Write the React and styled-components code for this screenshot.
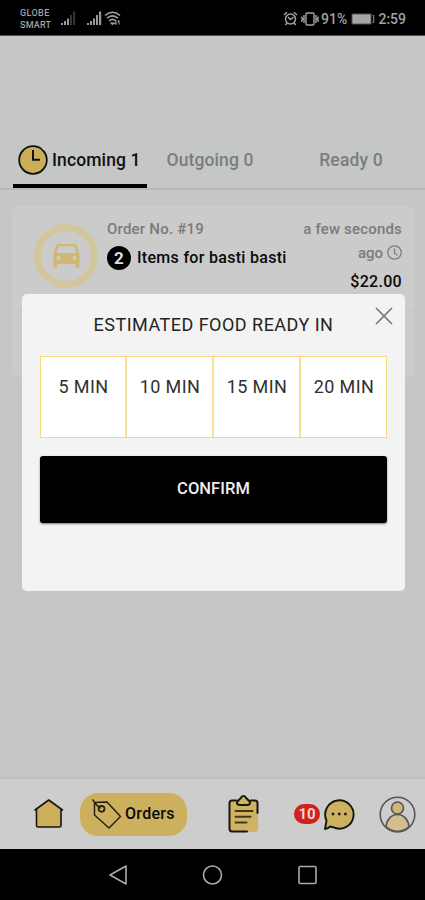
import React from 'react';
import styled, { createGlobalStyle } from 'styled-components';

const Global = createGlobalStyle`
  * { box-sizing: border-box; }
  body { margin: 0; background: #c5c7c6; font-family: Roboto, "Liberation Sans", sans-serif; }
  svg { display: block; flex: none; }
  button { font: inherit; border: 0; padding: 0; background: none; color: inherit; }
`;

const Phone = styled.div`
  position: relative;
  width: 425px;
  height: 900px;
  display: flex;
  flex-direction: column;
  overflow: hidden;
  background: #c5c7c6;
  color: #0a0a0a;
`;

const Label = styled.span`
  white-space: nowrap;
  font-size: ${(p) => p.$size || 16}px;
  font-weight: ${(p) => p.$weight || 500};
  line-height: ${(p) => p.$line || 20}px;
  letter-spacing: ${(p) => p.$track || 0}px;
  color: ${(p) => p.$color || 'inherit'};
`;

const StatusBar = styled.header`
  height: 36px;
  flex: none;
  padding: 2px 19px 0 20px;
  display: flex;
  align-items: center;
  background: #000;
  color: #a2a2a2;
  border-bottom: 1px solid #4b4c4c;
`;

const Carriers = styled.div`
  display: flex;
  flex-direction: column;
  width: 40px;
`;

const StatusRight = styled.div`
  display: flex;
  align-items: center;
  margin-left: auto;
`;

const Tabs = styled.nav`
  height: 60px;
  margin-top: 94px;
  flex: none;
  padding-left: 13px;
  display: grid;
  grid-template-columns: 134px 126px 156px;
  border-bottom: 2px solid #b7b9b8;
`;

const Tab = styled.button`
  display: flex;
  align-items: center;
  justify-content: ${(p) => (p.$active ? 'flex-start' : 'center')};
  gap: 4px;
  height: 58px;
  padding-left: ${(p) => (p.$active ? 5 : 0)}px;
  padding-top: ${(p) => (p.$active ? 5 : 1)}px;
  border-bottom: ${(p) => (p.$active ? '4px solid #000' : '0')};
  color: ${(p) => (p.$active ? '#111' : '#7c7d7d')};
`;

const OrderCard = styled.section`
  margin: 16px 11px 0 12px;
  height: 171px;
  flex: none;
  border-radius: 6px;
  background: #cbcbcb;
`;

const OrderMain = styled.div`
  height: 100px;
  display: flex;
  padding: 13px 12px 0 22px;
  border-bottom: 1px solid #d3d4d3;
`;

const Ring = styled.div`
  width: 64px;
  height: 64px;
  margin-top: 5px;
  border-radius: 50%;
  border: 7px solid #d2c69e;
  display: grid;
  place-items: center;
`;

const OrderInfo = styled.div`
  margin-left: 9px;
  display: flex;
  flex-direction: column;
`;

const ItemsLine = styled.div`
  display: flex;
  align-items: center;
  gap: 6px;
  margin-top: 7px;
`;

const Count = styled.span`
  width: 24px;
  height: 24px;
  border-radius: 50%;
  background: #000;
  color: #dedede;
  font-size: 17px;
  font-weight: 700;
  line-height: 24px;
  text-align: center;
`;

const OrderMeta = styled.div`
  margin-left: auto;
  display: flex;
  flex-direction: column;
  align-items: flex-end;
`;

const Ago = styled.div`
  display: flex;
  align-items: center;
  gap: 4px;
  margin: 4px 0 9px;
`;

const BottomNav = styled.nav`
  height: 72px;
  margin-top: auto;
  flex: none;
  display: flex;
  align-items: center;
  padding: 0 9px 0 33px;
  background: #cdcdcd;
  border-top: 2px solid #bfc1c0;
`;

const OrdersPill = styled.button`
  width: 107px;
  height: 43px;
  margin-left: 15px;
  padding-left: 12px;
  border-radius: 18px;
  background: #ccb05d;
  display: flex;
  align-items: center;
  gap: 3px;
`;

const NavSlot = styled.div`
  display: flex;
  align-items: center;
  gap: 3px;
  margin-left: ${(p) => p.$gap}px;
`;

const Badge = styled.span`
  width: 26px;
  height: 20px;
  border-radius: 10px;
  background: #d4201c;
  color: #eadada;
  font-size: 15px;
  font-weight: 700;
  line-height: 20px;
  text-align: center;
`;

const SystemNav = styled.footer`
  height: 51px;
  flex: none;
  display: flex;
  align-items: center;
  justify-content: center;
  gap: 73.500px;
  background: #000;
`;

const Modal = styled.section`
  position: absolute;
  top: 294px;
  left: 22px;
  width: 383px;
  height: 297px;
  padding: 0 18px;
  border-radius: 5px;
  background: #f3f3f3;
`;

const ModalTitle = styled.h1`
  margin: 0;
  height: 61px;
  padding-top: 21px;
  display: flex;
  justify-content: center;
`;

const Close = styled.button`
  position: absolute;
  top: 13px;
  right: 12px;
`;

const Times = styled.div`
  height: 82px;
  margin-top: 1px;
  display: grid;
  grid-template-columns: 86px 87px 87px 1fr;
  border: 1px solid #f9da7f;
`;

const Time = styled.button`
  background: #fff;
  padding-top: 20px;
  padding-left: 1px;
  display: flex;
  justify-content: center;
  align-items: flex-start;
  border-right: 2px solid #fae092;
  &:last-child { border-right: 0; }
`;

const Confirm = styled.button`
  width: 347px;
  height: 67px;
  margin-top: 18px;
  padding-bottom: 1px;
  display: flex;
  align-items: center;
  justify-content: center;
  border-radius: 3px;
  background: #000;
  box-shadow: 0 1px 2px rgba(0, 0, 0, 0.5);
`;

const Signal = ({ weak }) => (
  <svg width="17" height="17" viewBox="0 0 17 17" fill="#999">
    <path d="M1 13h2v2H1zM4 11h2v4H4zM7 8.500h2V15H7z" />
    <path d="M10 5h2v10h-2zM13 1.500h2.200V15H13z" fill={weak ? '#333' : '#999'} />
  </svg>
);

const Wifi = () => (
  <svg width="17" height="17" viewBox="0 0 17 17" fill="none" stroke="#a2a2a2" strokeWidth="1.600">
    <path d="M1 5.500q7.500-6.500 15 0M3 8.200q5.500-4.800 11 0M5.200 10.800q3.300-2.800 6.600 0" />
    <path d="M7 13l1.500 1.500L10 13zM12 10.500v4m-1.300-1.300L12 14.500M15 14.500v-4m-1.200 1.200L15 10.500" strokeWidth="1.100" />
  </svg>
);

const Alarm = () => (
  <svg width="15" height="15" viewBox="0 0 15 15" fill="none" stroke="#a2a2a2" strokeWidth="1.500">
    <circle cx="7.500" cy="8" r="5" />
    <path d="M1 4l3-2.800M14 4l-3-2.800M5 6l2.500 2.500L10.500 6M3.800 12L2.500 14M11.200 12l1.300 2" />
  </svg>
);

const Vibrate = () => (
  <svg width="18" height="16" viewBox="0 0 18 16" fill="none" stroke="#a2a2a2" strokeWidth="1.400">
    <rect x="5" y="2" width="8" height="12" rx="1" />
    <path d="M3 4v8M.8 5.500v1.500l1 1-1 1V11M15 4v8M17.200 5.500V7l-1 1 1 1v2" />
  </svg>
);

const Battery = () => (
  <svg width="24" height="12" viewBox="0 0 24 12">
    <rect x=".5" y=".5" width="20" height="11" rx="1" fill="#555" />
    <rect x="1.500" y="1.500" width="18" height="9" fill="#a6a6a6" />
    <path d="M21.500 2.500h1.200v7h-1.200" fill="none" stroke="#999" />
  </svg>
);

const TabClock = () => (
  <svg width="30" height="30" viewBox="0 0 30 30" fill="none" stroke="#111" strokeWidth="1.800">
    <circle cx="15" cy="15" r="13.800" fill="#ccad58" />
    <path d="M15 5v9.800h7" strokeWidth="2" />
    <path d="M24.800 3.200l1.300 1.300" stroke="#c5c7c6" strokeWidth="1.800" />
  </svg>
);

const Car = () => (
  <svg width="27" height="24" viewBox="0 0 28 24" preserveAspectRatio="none" fill="#cfb871">
    <path fillRule="evenodd" d="M5.500 0h17c1.400 0 2 .7 2.500 2l2.500 8v12.500c0 .8-.5 1.200-1.300 1.200h-1.500c-.8 0-1.300-.5-1.300-1.300V20H4.600v2.400c0 .8-.5 1.300-1.300 1.300H1.800c-.8 0-1.300-.4-1.300-1.200V10L3 2C3.400.7 4.200 0 5.500 0zM5.700 2.300L3.600 9h20.800l-2.100-6.700zM5.700 11.700a2 2 0 100 4.100 2 2 0 000-4.100zM22.300 11.700a2 2 0 100 4.100 2 2 0 000-4.100z" />
  </svg>
);

const AgoClock = () => (
  <svg width="15" height="16" viewBox="0 0 15 16" fill="none" stroke="#7b7b7b" strokeWidth="1.200">
    <circle cx="7.500" cy="7.500" r="6.700" />
    <path d="M7.500 3.500V8l3 2.300" />
  </svg>
);

const CloseIcon = () => (
  <svg width="18" height="18" viewBox="0 0 18 18" fill="none" stroke="#777" strokeWidth="1.700">
    <path d="M1 1l16 16M17 1L1 17" />
  </svg>
);

const Home = () => (
  <svg width="32" height="32" viewBox="0 0 32 32" fill="none" stroke="#17150d" strokeWidth="1.600" strokeLinejoin="round" strokeLinecap="round">
    <path d="M3.500 11.500L15.500 3l12.500 8.500v16q0 1.500-1.500 1.500H5q-1.500 0-1.500-1.500z" fill="#ccaf5c" stroke="none" />
    <path d="M2 12l13.700-10L29.500 12M3.500 11.500v16Q3.500 29 5 29h21.500q1.500 0 1.500-1.500v-16" />
  </svg>
);

const Tag = () => (
  <svg width="30" height="32" viewBox="0 0 30 32" fill="none" stroke="#211d10" strokeWidth="1.400" strokeLinecap="round" strokeLinejoin="round">
    <path d="M2.500 4.500L15 4l13.500 14.500L17 30 2.500 17zM.8 1.800C3 5.500 5 8 8.500 10" />
    <circle cx="9.500" cy="10.800" r="3" strokeWidth="1.700" />
  </svg>
);

const Clipboard = () => (
  <svg width="34" height="40" viewBox="0 0 34 40" fill="none" stroke="#19160d" strokeWidth="2" strokeLinejoin="round" strokeLinecap="round">
    <rect x="3" y="7" width="28" height="31" rx="3" fill="#d0b263" stroke="none" />
    <path d="M9.500 6.500H5Q2.500 6.500 2.500 9v25.500Q2.500 37.500 5 37.500h15M23.500 6.500H28q2.500 0 2.500 2.500v10" />
    <path d="M10 8l3-3.200q1 0 1-1Q14.500 2 16.500 2t2.500 1.800q0 1 1 1L23 8q.5 3-3 3h-7q-3.500 0-3-3z" fill="#d0b263" />
    <path d="M8.500 17h17M8.500 22.700h15M8.500 28.500h11" stroke="#40381f" strokeWidth="2" />
  </svg>
);

const Chat = () => (
  <svg width="32" height="33" viewBox="0 0 32 33" fill="#ccb160" stroke="#17150d" strokeWidth="1.900" strokeLinejoin="round">
    <path d="M2 31l1.500-8.500A14.200 14.200 0 1110 29.200L7 28.500q-1.500 2-5 2.500z" />
    <path d="M8.800 16h2.400M15 16h2.400M21.200 16h2.400" strokeWidth="2.400" />
  </svg>
);

const Profile = () => (
  <svg width="37" height="37" viewBox="0 0 37 37" fill="none" stroke="#555" strokeWidth="1.600">
    <path d="M7 31c.5-7 5-12.500 11.500-12.500S29.500 24 30 31q-11.500 9-23 0z" fill="#d6bd8c" />
    <circle cx="18.500" cy="12" r="6" fill="#ceb778" />
    <circle cx="18.500" cy="18.500" r="17.300" />
  </svg>
);

const SystemIcon = ({ children }) => (
  <svg width="21" height="22" viewBox="0 0 21 22" fill="none" stroke="#aaa" strokeWidth="1.600" strokeLinejoin="round">
    {children}
  </svg>
);

const options = ['5 MIN', '10 MIN', '15 MIN', '20 MIN'];

export default function App() {
  return (
    <Phone>
      <Global />
      <StatusBar>
        <Carriers>
          <Label $size={9} $line={12} $track={0.4}>GLOBE</Label>
          <Label $size={9} $line={12} $track={0.2}>SMART</Label>
        </Carriers>
        <Signal weak />
        <NavSlot $gap={9}><Signal /></NavSlot>
        <NavSlot $gap={1}><Wifi /></NavSlot>
        <StatusRight>
          <Alarm />
          <NavSlot $gap={3}><Vibrate /></NavSlot>
          <NavSlot $gap={2}><Label $size={14} $track={0.1}>91%</Label></NavSlot>
          <NavSlot $gap={4}><Battery /></NavSlot>
          <NavSlot $gap={3}><Label $size={14}>2:59</Label></NavSlot>
        </StatusRight>
      </StatusBar>

      <Tabs>
        <Tab $active><TabClock /><Label $size={17.5} $track={0.12}>Incoming 1</Label></Tab>
        <Tab><Label $size={17.5} $track={0.12}>Outgoing 0</Label></Tab>
        <Tab><Label $size={17.5} $track={0.15}>Ready 0</Label></Tab>
      </Tabs>

      <OrderCard>
        <OrderMain>
          <Ring><Car /></Ring>
          <OrderInfo>
            <Label $size={15} $track={0.22} $color="#7b7b7b">Order No. #19</Label>
            <ItemsLine>
              <Count>2</Count>
              <Label $size={16} $track={0.3}>Items for basti basti</Label>
            </ItemsLine>
          </OrderInfo>
          <OrderMeta>
            <Label $size={15} $track={0.18} $color="#7b7b7b">a few seconds</Label>
            <Ago><Label $size={15} $color="#7b7b7b">ago</Label><AgoClock /></Ago>
            <Label $size={16} $track={0.3}>$22.00</Label>
          </OrderMeta>
        </OrderMain>
      </OrderCard>

      <BottomNav>
        <Home />
        <OrdersPill><Tag /><Label $size={16} $track={0.3}>Orders</Label></OrdersPill>
        <NavSlot $gap={40}><Clipboard /></NavSlot>
        <NavSlot $gap={33}><Badge>10</Badge><Chat /></NavSlot>
        <NavSlot $gap={24}><Profile /></NavSlot>
      </BottomNav>

      <SystemNav>
        <SystemIcon><path d="M18 2v18L2 11z" /></SystemIcon>
        <SystemIcon><circle cx="10.500" cy="11" r="9" /></SystemIcon>
        <SystemIcon><rect x="2" y="2.500" width="17" height="17" rx="1" /></SystemIcon>
      </SystemNav>

      <Modal role="dialog">
        <ModalTitle><Label $size={18} $weight={400} $track={0.48} $color="#242424">ESTIMATED FOOD READY IN</Label></ModalTitle>
        <Close aria-label="Close"><CloseIcon /></Close>
        <Times>
          {options.map((text) => (
            <Time key={text}><Label $size={18} $weight={400} $track={0.4} $color="#303030">{text}</Label></Time>
          ))}
        </Times>
        <Confirm><Label $size={16.5} $track={0.05} $color="#eee">CONFIRM</Label></Confirm>
      </Modal>
    </Phone>
  );
}
